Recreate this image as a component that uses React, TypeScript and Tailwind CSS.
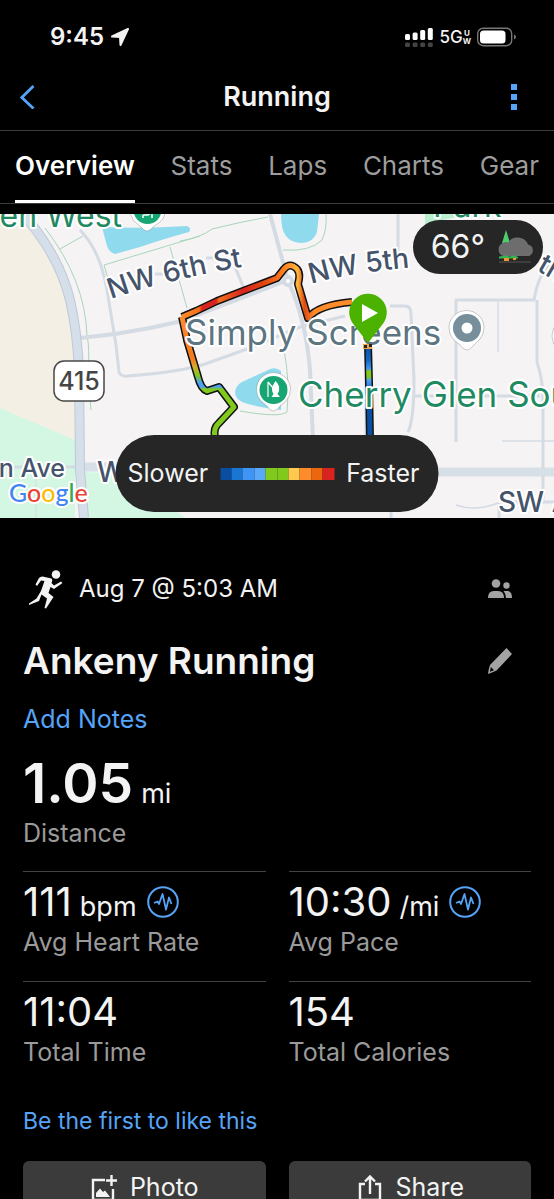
import React from 'react';

const legendColors = [
  'bg-[#0a4ea2]',
  'bg-[#1976d2]',
  'bg-[#3f95f5]',
  'bg-[#5aa9f9]',
  'bg-[#82c91e]',
  'bg-[#82c91e]',
  'bg-[#ffc94d]',
  'bg-[#ff8c2b]',
  'bg-[#ec660d]',
  'bg-[#d9231f]',
];

const tabs = ['Overview', 'Stats', 'Laps', 'Charts', 'Gear'];

interface Stat {
  label: string;
  value: string;
  unit?: string;
  insight?: boolean;
}

const stats: Stat[] = [
  { label: 'Avg Heart Rate', value: '111', unit: 'bpm', insight: true },
  { label: 'Avg Pace', value: '10:30', unit: '/mi', insight: true },
  { label: 'Total Time', value: '11:04' },
  { label: 'Total Calories', value: '154' },
];

function StatusBar() {
  return (
    <div className="flex h-[63px] shrink-0 items-center justify-between pt-[11px] pr-[37px] pl-[50px]">
      <div className="flex items-center gap-1.5">
        <span className="text-2xl leading-7 font-semibold">9:45</span>
        <svg className="h-5 w-5" viewBox="0 0 20 20" fill="currentColor" stroke="currentColor" strokeWidth="2" strokeLinejoin="round">
          <path d="M18 2 2 9.500 10 10 10.500 18Z" />
        </svg>
      </div>
      <div className="flex items-center gap-1.5">
        <svg className="h-5 w-7" viewBox="0 0 28 20">
          <g fill="#fff">
            <rect x="0" y="7" width="5" height="6" rx="1.500" />
            <rect x="7.600" y="5.500" width="5" height="7.500" rx="1.500" />
            <rect x="15.200" y="3" width="5" height="10" rx="1.500" />
            <rect x="22.800" y="1" width="5" height="12" rx="1.500" />
          </g>
          <g fill="#444">
            <rect x="0" y="15.500" width="5" height="4.500" rx="1.500" />
            <rect x="7.600" y="15.500" width="5" height="4.500" rx="1.500" />
            <rect x="15.200" y="15.500" width="5" height="4.500" rx="1.500" />
            <rect x="22.800" y="15.500" width="5" height="4.500" rx="1.500" />
          </g>
        </svg>
        <div className="flex items-center">
          <span className="text-[17px] leading-5 font-medium">5G</span>
          <span className="flex flex-col items-center text-[8px] leading-2 font-bold">
            <span>U</span>
            <span>W</span>
          </span>
        </div>
        <svg className="h-5 w-10" viewBox="0 0 40 20">
          <rect x=".7" y="1.200" width="34" height="17.500" rx="5.500" fill="none" stroke="#777" strokeWidth="1.400" />
          <rect x="3" y="3.500" width="25.500" height="13" rx="3.500" fill="#fff" />
          <path d="M37 7.500q2 .8 2 2.500t-2 2.500Z" fill="#777" />
        </svg>
      </div>
    </div>
  );
}

function Header() {
  return (
    <header className="flex h-[68px] shrink-0 items-center justify-between border-b border-[#3c3c3c] pr-7 pl-5">
      <button aria-label="Back" className="w-8 text-[#55a4f7]">
        <svg className="h-6 w-4" viewBox="0 0 16 24" fill="none" stroke="currentColor" strokeWidth="2.800">
          <path d="M13.500 1 1.800 12.500 13.500 23.500" />
        </svg>
      </button>
      <h1 className="text-[27px] leading-8 font-semibold">Running</h1>
      <button aria-label="More options" className="flex w-6 justify-center text-[#55a4f7]">
        <svg className="h-7 w-2" viewBox="0 0 8 28" fill="currentColor">
          <rect x="1" y="1" width="6" height="6" />
          <rect x="1" y="11" width="6" height="6" />
          <rect x="1" y="21" width="6" height="6" />
        </svg>
      </button>
    </header>
  );
}

function Tabs() {
  return (
    <nav className="flex h-[73px] shrink-0 justify-between border-b border-[#3c3c3c] px-[15px] text-[26px] leading-8">
      {tabs.map((tab, i) => (
        <button
          key={tab}
          className={
            i === 0
              ? 'border-b-3 border-white font-semibold text-white'
              : 'border-b-3 border-transparent text-[#9d9d9d]'
          }
        >
          {tab}
        </button>
      ))}
    </nav>
  );
}

function RouteMap() {
  const left = 'M182 317 187 340 198 377Q201 389 207 391L219 387 234 407 219 423Q213 428 215 437';
  const loop = 'M182 317 196 311 217 301 277 278 284 269Q290 262 297 269 301 274 298 284L308 318Q318 305 352 302';
  const right = 'M368 344 369 383 370 440';
  return (
    <svg
      className="h-full w-full"
      viewBox="0 214 554 304"
      preserveAspectRatio="xMidYMid slice"
      fontFamily="Inter, 'Liberation Sans', sans-serif"
    >
      <defs>
        <linearGradient id="pace-loop" gradientUnits="userSpaceOnUse" x1="182" y1="0" x2="352" y2="0">
          <stop offset="0" stopColor="#ff8c2b" />
          <stop offset=".1" stopColor="#f3701a" />
          <stop offset=".12" stopColor="#d9231f" />
          <stop offset=".2" stopColor="#d9231f" />
          <stop offset=".22" stopColor="#f3701a" />
          <stop offset=".36" stopColor="#d9231f" />
          <stop offset=".48" stopColor="#e2440f" />
          <stop offset=".6" stopColor="#ff8020" />
          <stop offset=".68" stopColor="#ffb53d" />
          <stop offset=".72" stopColor="#dd4a14" />
          <stop offset=".78" stopColor="#ff8c2b" />
        </linearGradient>
        <linearGradient id="pace-left" gradientUnits="userSpaceOnUse" x1="0" y1="317" x2="0" y2="400">
          <stop offset="0" stopColor="#ff8c2b" />
          <stop offset=".5" stopColor="#f47a1c" />
          <stop offset=".6" stopColor="#d8a92b" />
          <stop offset=".7" stopColor="#82c91e" />
          <stop offset=".8" stopColor="#4d9ff8" />
          <stop offset=".84" stopColor="#4d9ff8" />
          <stop offset=".87" stopColor="#82c91e" />
        </linearGradient>
        <linearGradient id="pace-right" gradientUnits="userSpaceOnUse" x1="0" y1="344" x2="0" y2="435">
          <stop offset="0" stopColor="#0a4ea2" />
          <stop offset=".18" stopColor="#1466c0" />
          <stop offset=".27" stopColor="#3f95f5" />
          <stop offset=".3" stopColor="#82c91e" />
          <stop offset=".36" stopColor="#82c91e" />
          <stop offset=".4" stopColor="#4d9ff8" />
          <stop offset=".55" stopColor="#0a4ea2" />
        </linearGradient>
        <path id="nw6" d="M111 299Q172 278 260 264" />
        <path id="nw5" d="M311 284Q350 272 430 266" />
      </defs>

      {/* land */}
      <rect y="214" width="554" height="304" fill="#f5f3f4" />
      <path d="M0 214H17Q52 250 64 290T75 360V440L0 408Z" fill="#f4efe4" />
      <path d="M0 408 75 440V518H0ZM85 472 130 474 185 518H85Z" fill="#d3f7e2" />
      <path d="M425 214H470L425 224Z" fill="#b9efcf" />

      {/* water */}
      <path d="M102 227Q145 229 187 226 192 228 189 232 160 240 140 247L115 254Q109 252 107 246Z" fill="#90daee" />
      <path d="M281 214H319L317 232Q314 242 302 243 291 243 286 236 281 230 281 214Z" fill="#90daee" />
      <path d="M235 392Q236 385 242 382L268 370Q275 366 281 371V410Q255 407 242 402 235 398 235 392Z" fill="#90daee" />

      {/* footpaths */}
      <g fill="none" stroke="#a9d5ba" strokeWidth="1">
        <path d="M45 228Q85 280 87 335 90 350 88 372 89 390 91 410M60 249 83 236M110 285 104 265 200 236M170 247 187 308M180 241Q200 238 212 229 240 222 268 217M283 250Q310 252 322 240 327 230 326 214M284 350Q290 380 287 412 280 418 240 411" />
      </g>

      {/* streets */}
      <g fill="none" stroke="#d5dbe3" strokeWidth="4" strokeLinejoin="round">
        <path d="M80 230Q100 250 107 290L116 345 119 372Q121 377 128 376 180 372 205 364L250 348 300 327 345 316" strokeWidth="3" />
        <path d="M80 338 115 334 150 328 182 321 283 282M270 214 288 281Q306 320 310 370L313 440" />
        <path d="M155 274H168M206 258H216M233 262 247 296" strokeWidth="3" />
        <path d="M456 442V300H534Q539 270 554 262M537 300V362Q543 380 543 400V500M398 214V252M525 230V262M390 306H405Q411 306 411 314L414 380Q414 420 408 432M414 396H540M532 262H538M366 375V440M391 490V518M499 503V518M502 502H554" strokeWidth="3" />
        <path d="M498 300V352M456 505Q475 512 498 503M502 441H554" strokeWidth="1.500" />
        <path d="M0 467H76" strokeWidth="3" />
        <path d="M84 467H130L430 472H554" strokeWidth="9" stroke="#d7e0e7" />
        <path d="M36 467V518" strokeWidth="1" />
      </g>
      <path d="M23 214Q59 255 70 300 77 330 79 370L80 470 84 518" fill="none" stroke="#bfc9d6" strokeWidth="10" />
      <path d="M23 214Q59 255 70 300 77 330 79 370L80 470 84 518" fill="none" stroke="#d5dfe9" strokeWidth="8" />
      <circle cx="288" cy="281" r="4" fill="#fff" stroke="#d5dbe3" strokeWidth="4" />

      {/* recorded track */}
      <g fill="none" strokeLinejoin="round">
        <g stroke="#111" strokeWidth="8">
          <path d={left} />
          <path d={loop} />
          <path d={right} />
        </g>
        <g strokeWidth="5">
          <path d={left} stroke="url(#pace-left)" />
          <path d={loop} stroke="url(#pace-loop)" />
          <path d={right} stroke="url(#pace-right)" />
        </g>
      </g>

      {/* place names */}
      <g stroke="#fff" strokeWidth="4" strokeLinejoin="round" paintOrder="stroke">
        <g fill="#1f8a62">
          <text x="122" y="227" fontSize="32" textAnchor="end">en West</text>
          <text x="433" y="217" fontSize="32">Park</text>
          <text x="298" y="407" fontSize="35">Cherry Glen South</text>
        </g>
        <text x="185" y="345" fontSize="35" fill="#5c7580">Simply Screens</text>
        <g fill="#45546b" fontSize="28" fontWeight="500">
          <text><textPath href="#nw6">NW 6th St</textPath></text>
          <text><textPath href="#nw5">NW 5th</textPath></text>
          <text x="536" y="270" transform="rotate(30 536 270)">th</text>
          <text x="65" y="477" fontSize="25" textAnchor="end">n Ave</text>
          <text x="97" y="482">W</text>
          <text x="498" y="512">SW Ave</text>
        </g>
        <text x="9" y="502" fontSize="25" fontWeight="500" fontFamily="Lato, sans-serif">
          <tspan fill="#4285f4">G</tspan>
          <tspan fill="#ea4335">o</tspan>
          <tspan fill="#fbbc05">o</tspan>
          <tspan fill="#4285f4">g</tspan>
          <tspan fill="#34a853">l</tspan>
          <tspan fill="#ea4335">e</tspan>
        </text>
      </g>

      {/* highway shield */}
      <rect x="54" y="361" width="50" height="40" rx="10" fill="#fff" stroke="#484848" strokeWidth="1.500" />
      <text x="79" y="390" fontSize="25" fontWeight="500" textAnchor="middle" fill="#454545">415</text>

      {/* pins */}
      <g stroke="#0003" strokeWidth="1">
        <path d="M467 350Q463 350 460 345L453 339A17.500 17.500 0 1 1 480 339L474 345Q470 350 467 350Z" fill="#fff" />
        <path d="M273 411Q270 411 267 406L261 401A17 17 0 1 1 286 401L280 406Q277 411 273 411Z" fill="#fff" />
        <path d="M147 231Q144 231 141 227L134 221A17 17 0 0 1 130 210H165Q165 218 160 222L153 227Q150 231 147 231Z" fill="#fff" />
        <path d="M558 322Q552 328 552 336T558 350Z" fill="#fff" />
      </g>
      <circle cx="467" cy="328" r="14" fill="#768f9b" />
      <circle cx="467" cy="328" r="5.500" fill="#fff" />
      <circle cx="273.500" cy="390" r="14" fill="#17a673" />
      <path d="M268 382V397M268 382 273 388" fill="none" stroke="#fff" strokeWidth="1.200" />
      <path d="M275.500 381Q280 385 279 391L277.500 394 280 397H271.500L273.500 394Q271 390 272.500 386Z" fill="#fff" />
      <circle cx="147.500" cy="210" r="14" fill="#17a673" />
      <path d="M143 215V218M143 215H148L152 212M152 214V218" stroke="#fff" strokeWidth="1.500" fill="none" />

      {/* start marker */}
      <path d="M363 344h9v5h-9z" fill="#f1a54a" />
      <path d="M364 345h3v3h-3zM369 344h3v3h-3z" fill="#222" />
      <path d="M368 343 354 325A18.800 18.800 0 1 1 382 325Z" fill="#4bb200" />
      <path d="M362 304V322L378 313Z" fill="#fff" />
    </svg>
  );
}

function WeatherIcon() {
  return (
    <svg className="h-9 w-10" viewBox="0 0 40 36">
      <path d="M11 1 7 14H15Z" fill="#4ccf6b" />
      <path d="M8 27A7 7 0 0 1 8 14Q10 12.500 13 13.500A11.500 11.500 0 0 1 33 15.500 6 6 0 0 1 34 27Z" fill="#6d6d6d" />
      <path d="M4 27.500 12 26.500 14 27.500 20 26.500 23 28V29.500H4Z" fill="#35b254" />
      <path d="M9 29h5v3H9zM18 29h3v2h-3z" fill="#f5932c" />
      <path d="M4 33H36" stroke="#555" strokeWidth="1" />
    </svg>
  );
}

function InsightIcon() {
  return (
    <svg className="h-8 w-8" viewBox="0 0 32 32" fill="none" stroke="currentColor" strokeLinejoin="round">
      <circle cx="16" cy="16" r="14.800" strokeWidth="2" />
      <path d="M7 17 10.500 15.500 12 18 15.500 8 19 23.500 22 11.500 24.500 18" strokeWidth="1.800" />
    </svg>
  );
}

function StatCell({ label, value, unit, insight }: Stat) {
  return (
    <div className="h-[110px] border-t border-[#434343] pt-2.5">
      <div className="flex h-10 items-center gap-2.5">
        <p className="flex items-baseline gap-2">
          <span className="text-[40px] leading-10">{value}</span>
          {unit && <span className="text-[27px] leading-8">{unit}</span>}
        </p>
        {insight && (
          <button aria-label={`${label} insights`} className="text-[#55a4f7]">
            <InsightIcon />
          </button>
        )}
      </div>
      <p className="mt-1 text-[25px] leading-8 text-[#9a9a9a]">{label}</p>
    </div>
  );
}

export default function App() {
  return (
    <div className="flex h-screen flex-col overflow-hidden bg-black font-[Inter,'Liberation_Sans',sans-serif] text-[#f3f3f3]">
      <StatusBar />
      <Header />
      <Tabs />

      <section className="relative mt-[10px] h-[304px] shrink-0 overflow-hidden">
        <RouteMap />
        <div className="absolute top-[6px] right-[11px] flex h-[54px] items-center gap-2.5 rounded-full bg-[#262626] pr-2 pl-[18px] text-[32px]">
          66°
          <WeatherIcon />
        </div>
        <div className="absolute bottom-[6px] left-1/2 flex h-[77px] -translate-x-1/2 items-center gap-3 rounded-full bg-[#262626] pr-[19px] pl-3 text-[25px]">
          <span>Slower</span>
          <div className="flex h-3 w-[114px]">
            {legendColors.map((color, i) => (
              <span key={i} className={`flex-1 ${color}`} />
            ))}
          </div>
          <span>Faster</span>
        </div>
      </section>

      <main className="shrink-0 px-[23px] pt-[51px]">
        <div className="flex h-10 items-center justify-between pr-[19px]">
          <div className="flex items-center gap-4">
            <svg className="ml-1 h-10 w-9" viewBox="0 0 36 40" fill="currentColor">
              <circle cx="29" cy="5.500" r="4.300" />
              <path d="M15.500 7.500 24.500 9.500Q26 11 24.500 14L27 16.500 34 12.500 35.500 14 27 20 23.500 18 21.500 24 26.500 28 19 39.500 17.500 39 20 29.500 14.500 25.500 12 32 2 36 2 34.500 9.500 29.500 14 22 17.500 12 14 11.500 10 17 8.500 15.500 12 9Q13 7.500 15.500 7.500Z" />
            </svg>
            <p className="text-2xl leading-8">Aug 7 @ 5:03 AM</p>
          </div>
          <button aria-label="Privacy" className="text-[#a3a3a3]">
            <svg className="h-6 w-6" viewBox="0 0 24 24" fill="currentColor">
              <circle cx="8" cy="6.500" r="4.300" />
              <circle cx="18.500" cy="8.500" r="3.200" />
              <path d="M0 21Q0 14 6 14H10Q16 14 16 21ZM15.500 14H20Q24 14.500 24 21H18Q18 17 15.500 14Z" />
            </svg>
          </button>
        </div>

        <div className="mt-7 flex h-12 items-center justify-between pr-[19px]">
          <h2 className="text-[37px] leading-12 font-semibold">Ankeny Running</h2>
          <button aria-label="Edit name" className="text-[#a3a3a3]">
            <svg className="h-7 w-6" viewBox="0 0 24 28" fill="currentColor">
              <path d="M18.500 1 24 7 8.500 23.500Q5 25 0 27 .5 22 2 18ZM2.800 20 2 24.800 6 23.200Z" fillRule="evenodd" />
            </svg>
          </button>
        </div>

        <a href="#notes" className="mt-3.5 block text-[25px] leading-10 text-[#55a4f7]">
          Add Notes
        </a>

        <div className="mt-2.5 mb-[22px]">
          <p className="flex items-baseline gap-2">
            <span className="text-[55px] leading-[68px] font-semibold">1.05</span>
            <span className="text-[27px]">mi</span>
          </p>
          <p className="text-[25px] leading-8 text-[#9a9a9a]">Distance</p>
        </div>

        <div className="grid grid-cols-2 gap-x-[23px]">
          {stats.map((stat) => (
            <StatCell key={stat.label} {...stat} />
          ))}
        </div>

        <a href="#like" className="mt-3 block text-[23px] leading-9 text-[#55a4f7]">
          Be the first to like this
        </a>

        <div className="mt-[22px] grid grid-cols-2 gap-x-[23px] text-[25px]">
          <button className="flex h-[54px] items-center justify-center gap-3 rounded-md bg-[#3b3b3b]">
            <svg className="h-7 w-7" viewBox="0 0 28 28" fill="none" stroke="currentColor" strokeWidth="2.400">
              <path d="M15 6H3V26H23V15M21.500 1V12M16 6.500H27" />
              <path d="M6 23V19L10 14.500 13 18 15 16.500 20 23Z" fill="currentColor" stroke="none" />
            </svg>
            Photo
          </button>
          <button className="flex h-[54px] items-center justify-center gap-3 rounded-md bg-[#3b3b3b]">
            <svg className="h-7 w-7" viewBox="0 0 28 28" fill="none" stroke="currentColor" strokeWidth="2.400">
              <path d="M9 10H4V26H24V10H19M14 20V3M9 7.500 14 2.500 19 7.500" />
            </svg>
            Share
          </button>
        </div>
      </main>
    </div>
  );
}
